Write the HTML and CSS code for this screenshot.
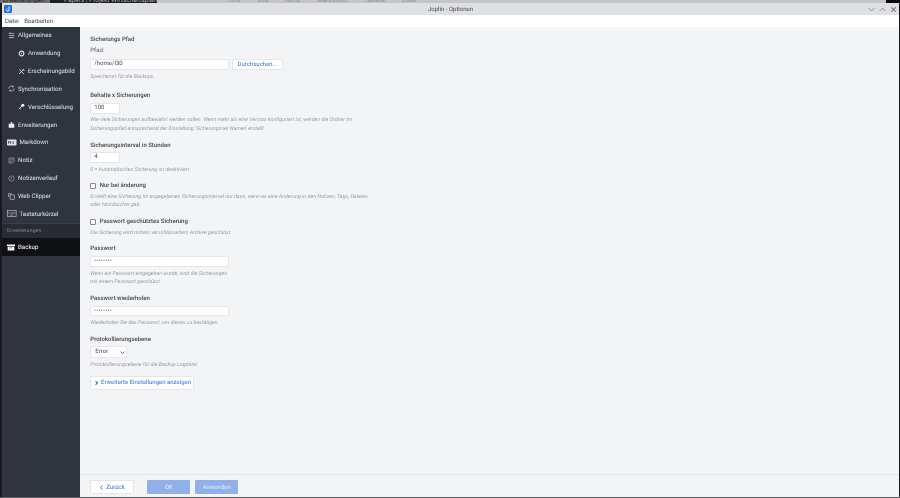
FILE: index.html
```html
<!DOCTYPE html>
<html lang="de">
<head>
<meta charset="utf-8">
<title>Joplin - Optionen</title>
<link rel="stylesheet" href="styles.css">
</head>
<body>
<div class="desktop-strip">
  <span class="strip-left">Erweiterungen</span>
  <span class="strip-title">Papers | Projekt Wirtschaftsplan</span>
  <span class="strip-tabs">Hilfe &nbsp; Bild &nbsp; Notiz &nbsp; Markdown &nbsp; Tabelle &nbsp; Liste</span>
  <span class="strip-end"></span>
</div>
<div class="window">
  <header class="titlebar">
    <span class="app-icon">
      <svg viewBox="0 0 12 12" width="8" height="8"><rect width="12" height="12" rx="2" fill="#1d74dc"/><path d="M7.6 2.2v5a2 2 0 0 1-2 2.2 2.2 2.2 0 0 1-2-1.4" fill="none" stroke="#fff" stroke-width="1.4"/><path d="M4.8 5.2a2 2 0 0 0 0 3" fill="none" stroke="#fff" stroke-width="1"/></svg>
    </span>
    <span class="title">Joplin - Optionen</span>
    <span class="win-controls">
      <svg viewBox="0 0 8 8" width="7" height="7"><path d="M1 2.5 4 5.5 7 2.5" fill="none" stroke="#77797c" stroke-width="1"/></svg>
      <svg viewBox="0 0 8 8" width="7" height="7"><path d="M1 5.5 4 2.5 7 5.5" fill="none" stroke="#77797c" stroke-width="1"/></svg>
      <svg viewBox="0 0 8 8" width="7" height="7"><path d="M1.5 1.5 6.5 6.5M6.5 1.5 1.5 6.5" fill="none" stroke="#77797c" stroke-width="1.2"/></svg>
    </span>
  </header>
  <nav class="menubar"><span>Datei</span><span>Bearbeiten</span></nav>
  <div class="body">
    <aside class="sidebar">
      <div class="item">
        <svg class="ico" viewBox="0 0 10 10"><path d="M1 2h8M1 5h8M1 8h8" stroke="#a9adb5" stroke-width="1.2"/><path d="M3 1v2M7 4v2M4 7v2" stroke="#d5d8dd" stroke-width="1.2"/></svg>
        <span>Allgemeines</span>
      </div>
      <div class="item sub">
        <svg class="ico" viewBox="0 0 10 10"><circle cx="5" cy="5" r="3.4" fill="none" stroke="#dfe2e7" stroke-width="1.5"/><circle cx="5" cy="5" r="1" fill="#dfe2e7"/></svg>
        <span>Anwendung</span>
      </div>
      <div class="item sub">
        <svg class="ico" viewBox="0 0 10 10"><path d="M1.5 2 8.5 8.5M8.5 1.5 1.5 8.5" stroke="#dfe2e7" stroke-width="1.2"/><path d="M6.2 1.2 9 4" stroke="#dfe2e7" stroke-width="1.2"/></svg>
        <span>Erscheinungsbild</span>
      </div>
      <div class="item">
        <svg class="ico" viewBox="0 0 10 10"><path d="M1.3 5a3.7 3.7 0 0 1 6.4-2.5M8.7 5a3.7 3.7 0 0 1-6.4 2.5" fill="none" stroke="#dfe2e7" stroke-width=".9"/><path d="M7 .8 8.4 2.8 6 3.2zM3 9.2 1.6 7.2 4 6.8z" fill="#dfe2e7"/></svg>
        <span>Synchronisation</span>
      </div>
      <div class="item sub">
        <svg class="ico" viewBox="0 0 10 10"><circle cx="6.8" cy="3.2" r="2.3" fill="#eceef1"/><path d="M5.5 4.5 1.5 8.5M2.5 7.5 3.8 8.6" stroke="#eceef1" stroke-width="1.3"/></svg>
        <span>Verschlüsselung</span>
      </div>
      <div class="item">
        <svg class="ico" viewBox="0 0 10 10"><path d="M1 4h3V1.5h2V4h3v5.5H1z" fill="#eceef1"/></svg>
        <span>Erweiterungen</span>
      </div>
      <div class="item">
        <svg class="ico wide" viewBox="0 0 13 8"><rect width="13" height="8" rx="1" fill="#dfe2e7"/><path d="M2 6V2l1.5 2L5 2v4M8.5 2v3M7.2 4.2 8.5 5.6l1.3-1.4" fill="none" stroke="#30343d" stroke-width=".9"/></svg>
        <span>Markdown</span>
      </div>
      <div class="item">
        <svg class="ico" viewBox="0 0 10 10"><path d="M1.5 1.5h7v5l-2 2h-5z" fill="none" stroke="#b5b9c0" stroke-width=".9"/><path d="M3 4h4M3 6h3" stroke="#b5b9c0" stroke-width=".8"/></svg>
        <span>Notiz</span>
      </div>
      <div class="item">
        <svg class="ico" viewBox="0 0 10 10"><circle cx="5" cy="5" r="3.8" fill="none" stroke="#b5b9c0" stroke-width=".8"/><path d="M5 2.5V5L3.6 6" fill="none" stroke="#b5b9c0" stroke-width=".8"/></svg>
        <span>Notizenverlauf</span>
      </div>
      <div class="item">
        <svg class="ico" viewBox="0 0 10 10"><rect x="3" y="2.5" width="6" height="7" rx="1" fill="none" stroke="#dfe2e7" stroke-width=".9"/><path d="M1 5.5V1h4" fill="none" stroke="#dfe2e7" stroke-width=".9"/></svg>
        <span>Web Clipper</span>
      </div>
      <div class="item">
        <svg class="ico wide" viewBox="0 0 13 9"><rect x=".5" y=".5" width="12" height="8" fill="none" stroke="#b5b9c0"/><path d="M2 3h9M2 5h9M4 7h5" stroke="#b5b9c0" stroke-dasharray="1 .6"/></svg>
        <span>Tastaturkürzel</span>
      </div>
      <div class="section-label">Erweiterungen</div>
      <div class="item active">
        <svg class="ico mid" viewBox="0 0 12 9"><path d="M0 0h12v2.4H0z" fill="#fff"/><path d="M1 3.2h10V9H1z" fill="#fff"/><path d="M4 5h4" stroke="#111" stroke-width=".8"/></svg>
        <span>Backup</span>
      </div>
    </aside>
    <main class="main">
      <div class="scroll">
        <h3 class="head first">Sicherungs Pfad</h3>
        <div class="sublabel">Pfad:</div>
        <div class="row">
          <div class="input path">/home/l30</div>
          <div class="btn browse">Durchsuchen...</div>
        </div>
        <p class="hint">Speicherort für die Backups.</p>

        <h3 class="head wide-gap">Behalte x Sicherungen</h3>
        <div class="input small">100</div>
        <p class="hint">Wie viele Sicherungen aufbewahrt werden sollen. Wenn mehr als eine Version konfiguriert ist, werden die Ordner im<br>Sicherungspfad entsprechend der Einstellung 'Sicherungsset Namen' erstellt</p>

        <h3 class="head">Sicherungsinterval in Stunden</h3>
        <div class="input small">4</div>
        <p class="hint">0 = Automatisches Sicherung ist deaktiviert</p>

        <label class="check"><span class="box"></span>Nur bei änderung</label>
        <p class="hint after-check">Erstellt eine Sicherung im angegebenen Sicherungsinterval nur dann, wenn es eine Änderung in den Notizen, Tags, Dateien<br>oder Notizbücher gab</p>

        <label class="check"><span class="box"></span>Passwort geschütztes Sicherung</label>
        <p class="hint after-check">Die Sicherung wird mittels verschlüsseltem Archive geschützt</p>

        <h3 class="head">Passwort</h3>
        <div class="input pass">••••••••</div>
        <p class="hint">Wenn ein Passwort eingegeben wurde, sind die Sicherungen<br>mit einem Passwort geschützt</p>

        <h3 class="head">Passwort wiederholen</h3>
        <div class="input pass">••••••••</div>
        <p class="hint">Wiederholen Sie das Passwort, um dieses zu bestätigen</p>

        <h3 class="head">Protokollierungsebene</h3>
        <div class="input select">Error
          <svg viewBox="0 0 8 8" width="5" height="5"><path d="M1 2.5 4 5.5 7 2.5" fill="none" stroke="#555" stroke-width="1.4"/></svg>
        </div>
        <p class="hint">Protokollierungsebene für die Backup Logdatei</p>

        <div class="btn advanced">
          <svg viewBox="0 0 8 8" width="5" height="6"><path d="M2.5 1 5.5 4 2.5 7" fill="none" stroke="#2d6fd2" stroke-width="1.8"/></svg>
          Erweiterte Einstellungen anzeigen
        </div>
      </div>
      <footer class="footer">
        <div class="btn back">
          <svg viewBox="0 0 8 8" width="5" height="7"><path d="M5.5 1 2.5 4 5.5 7" fill="none" stroke="#2d6fd2" stroke-width="1.6"/></svg>
          Zurück
        </div>
        <div class="btn primary">OK</div>
        <div class="btn primary">Anwenden</div>
      </footer>
    </main>
  </div>
</div>
<div class="desktop-bottom"></div>
</body>
</html>
```
FILE: styles.css
```css
* { box-sizing: border-box; }
html, body { margin: 0; padding: 0; }
body {
  width: 900px;
  height: 498px;
  overflow: hidden;
  background: #17181b;
  font-family: Roboto, "Liberation Sans", sans-serif;
  font-size: 6px;
  display: flex;
  flex-direction: column;
  text-rendering: geometricPrecision;
}
.desktop-strip {
  height: 3px;
  flex: none;
  overflow: hidden;
  background: #c4c5c8;
  display: flex;
  font-size: 6.5px;
  line-height: 0;
}
.desktop-strip span { display: block; height: 3px; white-space: nowrap; }
.strip-left { width: 50px; background: #6e6f72; color: #222; padding-left: 3px; }
.strip-title { width: 107px; background: #1e1f22; color: #a9abae; padding-left: 14px; }
.strip-tabs { flex: 1; color: #8d93a3; padding-left: 70px; word-spacing: 4px; }
.strip-end { width: 14px; background: #0b0b0c; }
.window {
  flex: 1;
  min-height: 0;
  display: flex;
  flex-direction: column;
  margin: 0 1px 0 2px;
  background: #f3f4f6;
  filter: blur(.35px);
}
.titlebar {
  height: 12px;
  flex: none;
  background: #dfe0e2;
  display: flex;
  align-items: center;
  padding: 0 2.5px 0 2px;
  position: relative;
}
.app-icon { display: flex; }
.title {
  position: absolute;
  left: 0;
  right: 0;
  padding-top: 1px;
  text-align: center;
  color: #44464a;
  font-size: 6px;
}
.win-controls { margin-left: auto; display: flex; gap: 3.7px; }
.menubar {
  height: 11.5px;
  flex: none;
  background: #fff;
  display: flex;
  align-items: center;
  gap: 5.5px;
  padding: .6px 0 0 3px;
  color: #3c3e42;
  font-size: 6px;
}
.body { flex: 1; min-height: 0; display: flex; }
.sidebar {
  width: 78px;
  flex: none;
  background: #30343e;
  color: #dfe2e7;
  font-size: 6.15px;
}
.item {
  height: 17.85px;
  display: flex;
  align-items: center;
  gap: 3px;
  padding-left: 6px;
}
.item.sub { padding-left: 16px; }
.ico { width: 7px; height: 7px; flex: none; }
.ico.wide { width: 9.5px; margin-left: -1px; }
.ico.mid { width: 8px; margin-left: -1px; }
.section-label {
  height: 15px;
  line-height: 15px;
  background: #282b33;
  color: #7f838c;
  padding-left: 5px;
  font-size: 5.4px;
  border-top: 1px solid #3a3e49;
}
.item.active { background: #101114; color: #fff; height: 18.6px; }
.main { flex: 1; min-width: 0; display: flex; flex-direction: column; }
.scroll { flex: 1; min-height: 0; padding: 8.5px 10.3px 0; }
.head {
  margin: 8.2px 0 2.7px;
  font-size: 6px;
  line-height: 8px;
  font-weight: 500;
  color: #44464a;
}
.head.first { margin-top: .6px; }
.head.wide-gap { margin-top: 10.9px; }
.sublabel { font-size: 6px; line-height: 8px; color: #5a5d63; margin: 3.6px 0 4.1px; }
.row { display: flex; gap: 3px; }
.input {
  height: 10.8px;
  background: #fff;
  border: 1px solid #e4e6ea;
  border-radius: 1px;
  font-size: 6px;
  line-height: 8.8px;
  color: #44464a;
  padding-left: 3px;
}
.input.path { width: 139px; }
.input.small { width: 29.4px; }
.input.pass { width: 139px; font-size: 5px; letter-spacing: .55px; color: #33363c; }
.input.select { width: 36.4px; height: 11.6px; display: flex; justify-content: space-between; align-items: center; padding: 0 1px 0 4px; }
.hint {
  margin: 2.6px 0 0;
  font-size: 5.3px;
  line-height: 8.6px;
  font-style: italic;
  color: #989da7;
}
.hint.after-check { margin-top: 3px; }
.btn {
  display: flex;
  align-items: center;
  justify-content: center;
  background: #fff;
  border: 1px solid #e4e6ea;
  border-radius: 1px;
  color: #2d6fd2;
  font-size: 6px;
}
.browse { width: 50.4px; height: 10.8px; }
.check {
  display: flex;
  align-items: center;
  gap: 3.4px;
  margin-top: 7.6px;
  height: 8px;
  font-size: 6px;
  font-weight: 500;
  color: #44464a;
}
.box { width: 6px; height: 6px; background: #fff; border: 1px solid #85878c; border-radius: 1px; }
.advanced { width: 104px; height: 14px; margin-top: 6.7px; gap: 2.5px; }
.footer {
  flex: none;
  height: 22.5px;
  border-top: 1px solid #e6e7ea;
  display: flex;
  align-items: flex-start;
  gap: 13.3px;
  padding: 5px 10.3px 0;
}
.footer .btn { height: 14px; }
.back { width: 43.4px; gap: 2px; }
.primary { width: 43.4px; background: #8fb0e8; border-color: #8fb0e8; color: #e6edf9; }
.primary + .primary { margin-left: -8.6px; }
.desktop-bottom { height: 1.5px; flex: none; background: #5c5d61; }
```
